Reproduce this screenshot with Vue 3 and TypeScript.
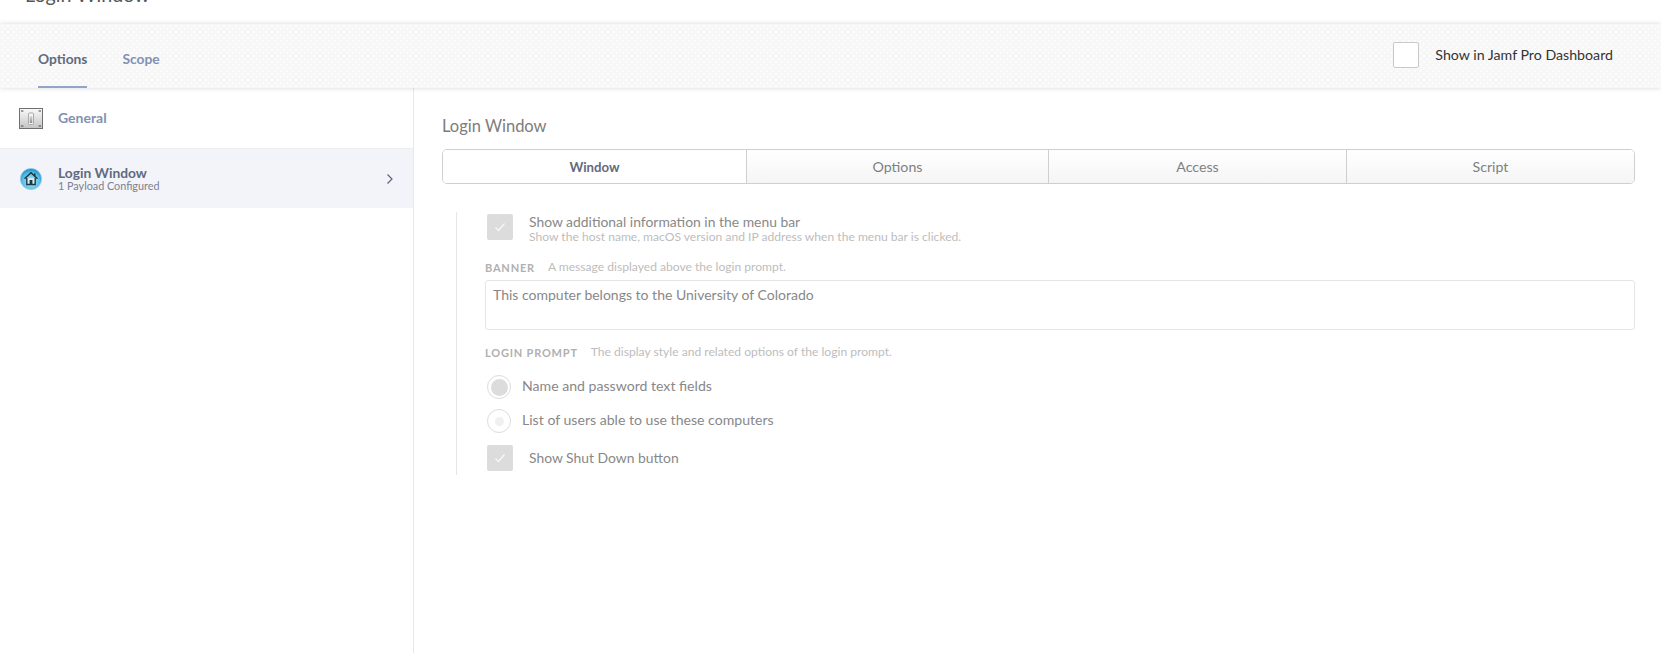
<script setup lang="ts">
const tabs: { label: string; width: string; active?: boolean }[] = [
  { label: 'Window', width: '303px', active: true },
  { label: 'Options', width: '302px' },
  { label: 'Access', width: '298px' },
  { label: 'Script', width: '1fr' },
]
const tabColumns = tabs.map((t) => t.width).join(' ')
</script>

<template>
  <div class="page">
    <header class="top">
      <h1 class="page-title">Login Window</h1>
    </header>

    <div class="band">
      <nav class="band-tabs">
        <a class="band-tab band-tab-active">Options</a>
        <a class="band-tab">Scope</a>
      </nav>
      <label class="dash">
        <span class="dash-box"></span>
        <span class="dash-text">Show in Jamf Pro Dashboard</span>
      </label>
    </div>

    <div class="body">
      <aside class="side">
        <div class="side-row side-general">
          <svg class="ic-general" width="24" height="21" viewBox="0 0 24 21">
            <defs>
              <linearGradient id="plate" x1="0" y1="0" x2="0" y2="1">
                <stop offset="0" stop-color="#fafafa" />
                <stop offset="1" stop-color="#c4c4c4" />
              </linearGradient>
              <linearGradient id="sw" x1="0" y1="0" x2="0" y2="1">
                <stop offset="0" stop-color="#d8d8d8" />
                <stop offset="1" stop-color="#8e8e8e" />
              </linearGradient>
            </defs>
            <rect x="0.5" y="0.5" width="23" height="20" fill="url(#plate)" stroke="#6f6f6f" />
            <rect x="2" y="2.400" width="2.400" height="1.200" fill="#5f5f5f" />
            <rect x="19.600" y="2.400" width="2.400" height="1.200" fill="#5f5f5f" />
            <rect x="2" y="17.400" width="2.400" height="1.200" fill="#5f5f5f" />
            <rect x="19.600" y="17.400" width="2.400" height="1.200" fill="#5f5f5f" />
            <rect x="9.500" y="5" width="5" height="11.500" rx="1" fill="#f5f5f5" stroke="#9a9a9a" stroke-width="0.800" />
            <rect x="10.700" y="8" width="2.600" height="7" fill="url(#sw)" />
          </svg>
          <span class="side-title-general">General</span>
        </div>
        <div class="side-row side-login">
          <svg class="ic-home" width="22" height="22" viewBox="0 0 22 22">
            <defs>
              <radialGradient id="ball" cx="0.5" cy="0.62" r="0.6">
                <stop offset="0" stop-color="#b5e8f8" />
                <stop offset="0.65" stop-color="#5cc0e8" />
                <stop offset="1" stop-color="#1f8cc6" />
              </radialGradient>
            </defs>
            <circle cx="11" cy="11" r="10.600" fill="url(#ball)" stroke="#8ecde9" stroke-width="0.800" />
            <path d="M11 4.700 5 10.300M11 4.700l6 5.600" fill="none" stroke="#1e3843" stroke-width="1.500" stroke-linecap="round" />
            <path d="M6.800 10v6.500h8.400V10" fill="#cfeef8" stroke="#1e3843" stroke-width="1.400" />
            <rect x="9.600" y="12" width="2.800" height="4.500" fill="#1e3843" />
            <rect x="14" y="5.400" width="1.500" height="3" fill="#1e3843" />
          </svg>
          <div class="side-text">
            <div class="side-title">Login Window</div>
            <div class="side-sub">1 Payload Configured</div>
          </div>
          <svg class="chev" width="8" height="12" viewBox="0 0 8 12">
            <path d="M1.500 1.500 6 6l-4.500 4.500" fill="none" stroke="#5c6478" stroke-width="1.200" />
          </svg>
        </div>
      </aside>

      <main class="main">
        <h2 class="main-title">Login Window</h2>
        <div class="seg" :style="{ gridTemplateColumns: tabColumns }">
          <div v-for="t in tabs" :key="t.label" class="seg-item" :class="{ 'seg-active': t.active }">{{ t.label }}</div>
        </div>

        <section class="form">
          <div class="check-row first">
            <span class="box">
              <svg width="12" height="10" viewBox="0 0 12 10"><path d="M1.500 5.500 4.500 8.500 10.500 1.500" fill="none" stroke="#f8f8f8" stroke-width="1.200" /></svg>
            </span>
            <div class="check-text">
              <div class="label">Show additional information in the menu bar</div>
              <div class="hint">Show the host name, macOS version and IP address when the menu bar is clicked.</div>
            </div>
          </div>

          <div class="field-head banner-head">
            <span class="caps">BANNER</span>
            <span class="hint">A message displayed above the login prompt.</span>
          </div>
          <div class="input">This computer belongs to the University of Colorado</div>

          <div class="field-head prompt-head">
            <span class="caps">LOGIN PROMPT</span>
            <span class="hint">The display style and related options of the login prompt.</span>
          </div>

          <div class="radio-row radio-one">
            <span class="radio"><span class="dot dot-on"></span></span>
            <span class="label radio-label">Name and password text fields</span>
          </div>
          <div class="radio-row radio-two">
            <span class="radio"><span class="dot dot-off"></span></span>
            <span class="label radio-label">List of users able to use these computers</span>
          </div>

          <div class="check-row last">
            <span class="box">
              <svg width="12" height="10" viewBox="0 0 12 10"><path d="M1.500 5.500 4.500 8.500 10.500 1.500" fill="none" stroke="#f8f8f8" stroke-width="1.200" /></svg>
            </span>
            <span class="label">Show Shut Down button</span>
          </div>
        </section>
      </main>
    </div>
  </div>
</template>

<style>
html, body { margin: 0; background: #fff; }
</style>

<style scoped>
.page {
  width: 1661px;
  height: 653px;
  overflow: hidden;
  display: flex;
  flex-direction: column;
  font-family: "Lato", "Open Sans", sans-serif;
  background: #fff;
  color: #777;
}
.top {
  height: 24px;
  overflow: hidden;
  flex: none;
}
.page-title {
  margin: -20px 0 0 25px;
  font-size: 19.700px;
  line-height: 30px;
  font-weight: 400;
  color: #555;
}
.band {
  height: 64px;
  flex: none;
  box-sizing: border-box;
  display: flex;
  justify-content: space-between;
  background-color: #f7f7f7;
  background-image:
    radial-gradient(circle at 2px 2px, #fdfdfd 1px, transparent 1.6px),
    radial-gradient(circle at 5px 5px, #fcfcfc 1px, transparent 1.6px);
  background-size: 6px 6px;
  box-shadow: 0 0 5px rgba(0, 0, 0, 0.16);
  position: relative;
  z-index: 1;
}
.band-tabs {
  display: flex;
  gap: 35px;
  padding-left: 38px;
}
.band-tab {
  font-size: 13.800px;
  font-weight: 700;
  color: #8191b2;
  height: 64px;
  box-sizing: border-box;
  line-height: 69px;
}
.band-tab-active {
  color: #626a80;
  border-bottom: 2px solid #92a5c9;
}
.dash {
  display: flex;
  align-items: center;
  gap: 16px;
  padding-right: 48px;
  margin-top: -3px;
}
.dash-box {
  width: 26px;
  height: 26px;
  box-sizing: border-box;
  background: #fff;
  border: 1px solid #c9c9c9;
  border-radius: 2px;
}
.dash-text {
  font-size: 14.200px;
  color: #333;
}
.body {
  flex: 1;
  display: flex;
  min-height: 0;
}
.side {
  width: 414px;
  flex: none;
  box-sizing: border-box;
  border-right: 1px solid #e8e8e8;
}
.side-row {
  display: flex;
  align-items: center;
  box-sizing: border-box;
}
.side-general {
  height: 61px;
  padding-left: 19px;
  border-bottom: 1px solid #ededed;
}
.ic-general {
  margin-right: 15px;
}
.side-title-general {
  font-size: 14px;
  font-weight: 700;
  color: #8191b2;
  margin-top: -2px;
}
.side-login {
  height: 59px;
  padding-left: 20px;
  background: #f2f4f9;
}
.ic-home {
  margin-right: 16px;
}
.side-text {
  flex: 1;
}
.side-title {
  font-size: 13.800px;
  font-weight: 700;
  color: #626a80;
  line-height: 14px;
}
.side-sub {
  font-size: 10.800px;
  color: #7a8091;
  line-height: 12px;
}
.chev {
  margin-right: 19px;
}
.main {
  flex: 1;
  padding: 0 26px 0 28px;
  min-width: 0;
}
.main-title {
  margin: 28px 0 0;
  font-size: 16.500px;
  font-weight: 400;
  line-height: 20px;
  color: #7c7c7c;
}
.seg {
  margin-top: 13px;
  display: grid;
  height: 35px;
  box-sizing: border-box;
  border: 1px solid #cfcfcf;
  border-radius: 5px;
  overflow: hidden;
}
.seg-item {
  display: flex;
  align-items: center;
  justify-content: center;
  font-size: 14.200px;
  color: #808080;
  background: linear-gradient(#ffffff, #f5f5f5);
  border-left: 1px solid #cfcfcf;
}
.seg-item:first-child {
  border-left: 0;
}
.seg-active {
  background: #fff;
  color: #626a80;
  font-size: 13.200px;
  font-weight: 700;
}
.form {
  margin-top: 28px;
  margin-left: 14px;
  border-left: 1px solid #e6e6e6;
  height: 263px;
  padding-left: 28px;
  box-sizing: border-box;
}
.check-row {
  display: flex;
  align-items: center;
  margin-left: 2px;
}
.first {
  padding-top: 2px;
  align-items: flex-start;
}
.last {
  margin-top: 12px;
}
.box {
  width: 26px;
  height: 26px;
  flex: none;
  background: #dcdcdc;
  border-radius: 2px;
  display: flex;
  align-items: center;
  justify-content: center;
  margin-right: 16px;
}
.label {
  font-size: 13.900px;
  line-height: 18px;
  color: #888;
}
.radio-label {
  font-size: 14.100px;
  margin-top: -2px;
}
.hint {
  font-size: 12.100px;
  line-height: 14px;
  color: #bdbdbd;
}
.check-text {
  margin-top: -1px;
}
.check-text .hint {
  margin-top: -1px;
}
.field-head {
  display: flex;
  align-items: center;
  gap: 13px;
}
.caps {
  font-size: 11px;
  font-weight: 700;
  letter-spacing: 0.800px;
  color: #b0b0b0;
}
.banner-head {
  margin-top: 16px;
}
.input {
  margin-top: 6px;
  height: 50px;
  box-sizing: border-box;
  border: 1px solid #e6e6e6;
  border-radius: 3px;
  padding: 5px 7px;
  font-size: 14px;
  line-height: 18px;
  color: #888;
}
.prompt-head {
  margin-top: 15px;
}
.radio-row {
  display: flex;
  align-items: center;
  gap: 11px;
  margin-left: 2px;
}
.radio-one {
  margin-top: 16px;
}
.radio-two {
  margin-top: 10px;
}
.radio {
  width: 24px;
  height: 24px;
  box-sizing: border-box;
  border: 1px solid #dcdcdc;
  border-radius: 50%;
  display: flex;
  align-items: center;
  justify-content: center;
}
.dot {
  border-radius: 50%;
}
.dot-on {
  width: 17px;
  height: 17px;
  background: #dcdcdc;
}
.dot-off {
  width: 9px;
  height: 9px;
  background: #f0f0f0;
}
</style>
